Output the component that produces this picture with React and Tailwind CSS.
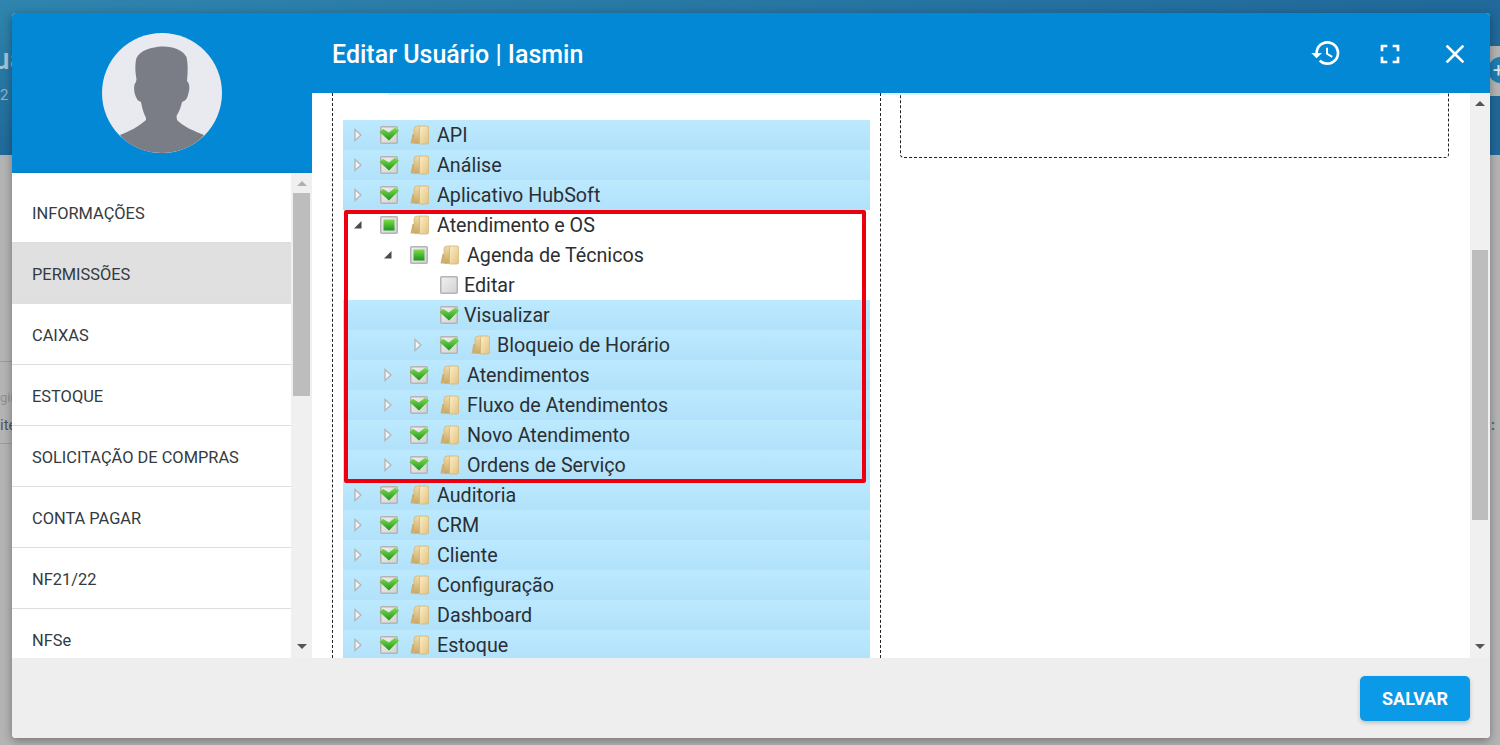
import React from "react";
import { MdHistory, MdFullscreen, MdClose } from "react-icons/md";

function Arrow({ open }) {
  if (open)
    return (
      <svg width="10" height="10" viewBox="0 0 10 10" className="block">
        <path d="M1 8.5 L8.5 8.5 L8.5 1 Z" fill="#4a4a4a" />
      </svg>
    );
  return (
    <svg width="8" height="14" viewBox="0 0 8 14" className="block">
      <path d="M1 1.5 L7 7 L1 12.5 Z" fill="#f2f6f8" stroke="#b4b8bb" strokeWidth="1.4" />
    </svg>
  );
}

function Check({ state, id }) {
  return (
    <svg width="18" height="18" viewBox="0 0 18 18" className="block shrink-0 overflow-visible">
      <defs>
        <linearGradient id={"g" + id} x1="0" y1="0" x2="0" y2="1">
          <stop offset="0" stopColor="#7fdc4a" />
          <stop offset="1" stopColor="#1c951f" />
        </linearGradient>
        <linearGradient id={"e" + id} x1="0" y1="0" x2="1" y2="1">
          <stop offset="0" stopColor="#f0f0f0" />
          <stop offset="1" stopColor="#d2d2d2" />
        </linearGradient>
      </defs>
      <rect x="0.75" y="0.75" width="16.5" height="16.5" rx="1" fill={`url(#e${id})`} stroke="#b4b4b4" strokeWidth="1.5" />
      {state === "on" && <path d="M-0.5 6 L3 2.8 L8.8 6.5 L15 1.8 L19 4.5 L9 14.5 Z" fill={`url(#g${id})`} />}
      {state === "part" && <rect x="3.5" y="3.5" width="11" height="11" fill={`url(#g${id})`} />}
    </svg>
  );
}

function Folder({ id }) {
  return (
    <svg width="19" height="20" viewBox="0 0 19 20" className="block shrink-0">
      <defs>
        <linearGradient id={"f" + id} x1="0" y1="0" x2="1" y2="1">
          <stop offset="0" stopColor="#fbeec6" />
          <stop offset="1" stopColor="#e2c27f" />
        </linearGradient>
        <linearGradient id={"l" + id} x1="0" y1="0" x2="0" y2="1">
          <stop offset="0" stopColor="#f0dca8" />
          <stop offset="1" stopColor="#c9a766" />
        </linearGradient>
      </defs>
      <path d="M0.5 18.5 L2.5 9 L7 9 L7 18.5 Z" fill="#cfae6e" />
      <path d="M4 4 Q4 1 7.5 1 L11 1 L11 18.5 L5.5 18.5 Q4 18.5 4 17 Z" fill={`url(#l${id})`} stroke="#d0b275" strokeWidth="0.7" />
      <path d="M9.5 2.5 Q9.5 1 12 1 L17 1 Q18.7 1 18.7 3 L18.7 17 Q18.7 19 16.7 19 L9.5 19 Z" fill={`url(#f${id})`} stroke="#d3b476" strokeWidth="0.8" />
    </svg>
  );
}

const rows = [
  { t: "API", l: 0, s: "on", blue: true },
  { t: "Análise", l: 0, s: "on", blue: true },
  { t: "Aplicativo HubSoft", l: 0, s: "on", blue: true },
  { t: "Atendimento e OS", l: 0, s: "part", open: true },
  { t: "Agenda de Técnicos", l: 1, s: "part", open: true },
  { t: "Editar", l: 2, s: "off", leaf: true },
  { t: "Visualizar", l: 2, s: "on", leaf: true, blue: true },
  { t: "Bloqueio de Horário", l: 2, s: "on", blue: true, wide: true },
  { t: "Atendimentos", l: 1, s: "on", blue: true },
  { t: "Fluxo de Atendimentos", l: 1, s: "on", blue: true },
  { t: "Novo Atendimento", l: 1, s: "on", blue: true },
  { t: "Ordens de Serviço", l: 1, s: "on", blue: true },
  { t: "Auditoria", l: 0, s: "on", blue: true },
  { t: "CRM", l: 0, s: "on", blue: true },
  { t: "Cliente", l: 0, s: "on", blue: true },
  { t: "Configuração", l: 0, s: "on", blue: true },
  { t: "Dashboard", l: 0, s: "on", blue: true },
  { t: "Estoque", l: 0, s: "on", blue: true },
];

const nav = ["INFORMAÇÕES", "PERMISSÕES", "CAIXAS", "ESTOQUE", "SOLICITAÇÃO DE COMPRAS", "CONTA PAGAR", "NF21/22", "NFSe"];

function Row({ r, i }) {
  const indent = r.l === 0 ? "pl-0" : r.l === 1 ? "pl-[30px]" : "pl-[60px]";
  return (
    <div
      className={`flex h-[30px] shrink-0 items-center ${indent} ${
        r.blue ? "bg-linear-to-b from-[#bce9fe] to-[#b1e2fb]" : "bg-white"
      }`}
    >
      <div className="flex w-[30px] shrink-0 items-center justify-center pr-[1px]">{!r.leaf && <Arrow open={r.open} />}</div>
      <div className="ml-[7px]">
        <Check state={r.s} id={i} />
      </div>
      {!r.leaf && (
        <div className={r.wide ? "ml-[13px]" : "ml-[12px]"}>
          <Folder id={i} />
        </div>
      )}
      <span className={`pt-[2px] text-[19.7px] leading-[30px] text-[#2b2f33] ${r.leaf ? "ml-[6px]" : r.wide ? "ml-[7px]" : "ml-[8px]"}`}>{r.t}</span>
    </div>
  );
}

function Scrollbar({ thumbTop, thumbH, className, upClass }) {
  return (
    <div className={`flex h-full shrink-0 flex-col items-center bg-[#f0f0f0] ${className}`}>
      <div className={`mt-[8px] h-0 w-0 border-x-[5px] border-b-[5px] border-x-transparent ${upClass}`} />
      <div className="w-full flex-1 px-[2px]" style={{ paddingTop: thumbTop }}>
        <div className="w-full bg-[#bdbdbd]" style={{ height: thumbH }} />
      </div>
      <div className="mb-[9px] h-0 w-0 border-x-[5px] border-t-[5px] border-x-transparent border-t-[#555]" />
    </div>
  );
}

export default function App() {
  return (
    <div className="relative h-[745px] w-[1500px] overflow-hidden bg-[#b4b4b4] font-['Roboto',sans-serif]">
      {/* Dimmed page behind the dialog */}
      <div className="h-[155px] bg-linear-to-br from-[#2f85ad] via-[#20699a] to-[#20689a]" />
      <div className="absolute left-[-7px] top-[36px] text-[30px] font-medium text-[#a5c4d6]">ua</div>
      <div className="absolute left-0 top-[84px] text-[15px] text-[#90b4c9]">2</div>
      <div className="absolute left-0 top-[361px] h-px w-[12px] bg-[#9c9c9c]" />
      <div className="absolute left-0 top-[390px] text-[13px] leading-[16px] text-[#8f8f8f]">gin</div>
      <div className="absolute left-0 top-[416px] text-[15px] leading-[18px] text-[#555]">ite</div>
      <div className="absolute left-0 top-[443px] h-px w-[12px] bg-[#9c9c9c]" />
      <div className="absolute left-[1490px] top-[46px] h-[50px] w-[10px] bg-[#b4b4b4]" />
      <div className="absolute left-[1488px] top-[57px] flex h-[26px] w-[26px] items-center justify-center rounded-full bg-[#1d7db3] pr-[5px] text-[20px] leading-none text-[#d8e6ee]">+</div>
      <div className="absolute left-[1491px] top-[418px] text-[14px] font-bold leading-[14px] text-[#4a6a80]">:</div>

      {/* Dialog */}
      <div className="absolute left-[12px] top-[13px] flex h-[725px] w-[1478px] flex-col overflow-hidden rounded-[4px] bg-white shadow-[0_3px_10px_rgba(0,0,0,0.35)]">
        <div className="flex min-h-0 flex-1 overflow-hidden">
          {/* Left column */}
          <div className="flex w-[300px] shrink-0 flex-col">
            <div className="flex h-[160px] shrink-0 items-center justify-center bg-[#0388d5]">
              <div className="h-[120px] w-[120px] overflow-hidden rounded-full bg-[#e9eaef]">
                <svg width="120" height="120" viewBox="0 0 120 120" className="block">
                  <path
                    d="M60 13.5 C50 14 38 17 34.5 25 C33 30 33 38 34.5 46 L34 49 C31 52 32 60 34 64 C35.5 68 38 68.5 39 69 C40 74 41 79 44 85 L44 87 C36 94 28 98 18 102 C26 114 42 120 60 120 C80 120 94 112 102 102 C92 98 82 94 75 87 L74.5 83 C77 79 79 74 80 69 C83 68 85 66 86 62 C88 56 88 51 85 48 C86 38 86 30 84.5 24 C81 17 70 13 60 13.5 Z"
                    fill="#7a7d85"
                  />
                </svg>
              </div>
            </div>
            <div className="relative flex min-h-0 flex-1 bg-white shadow-[1px_0_4px_rgba(0,0,0,0.12)]">
              <div className="min-w-0 flex-1 overflow-hidden pt-[9px]">
                {nav.map((n) => (
                  <div
                    key={n}
                    className={`flex h-[61px] items-center border-b border-[#dedede] pl-[20px] pt-[5px] text-[16.4px] text-[#333a40] ${
                      n === "PERMISSÕES" ? "bg-[#e0e0e0]" : ""
                    }`}
                  >
                    {n}
                  </div>
                ))}
              </div>
              <Scrollbar thumbTop={7} thumbH={203} className="w-[21px]" upClass="border-b-[#b0b0b0]" />
            </div>
          </div>

          {/* Right column */}
          <div className="flex min-w-0 flex-1 flex-col">
            <div className="flex h-[80px] shrink-0 items-center bg-[#0388d5] pl-[20px] text-white">
              <div className="pt-[3px] text-[25px] font-medium">Editar Usuário | Iasmin</div>
              <div className="ml-auto flex items-center pr-[19px]">
                <MdHistory size={32} />
                <MdFullscreen size={32} className="ml-[32px] mt-[2px]" />
                <MdClose size={32} className="ml-[33px] mt-[2px]" />
              </div>
            </div>
            <div className="relative flex min-h-0 flex-1 bg-white">
              <div className="absolute left-[76px] right-[50px] top-0 h-[2px] bg-[#dff3fc]" />
              <div className="flex min-w-0 flex-1 items-start overflow-hidden pl-[20px]">
                <div className="relative flex h-full w-[549px] shrink-0 flex-col overflow-hidden border-x border-dashed border-[#222] pl-[10px] pr-[10px] pt-[27px]">
                  {rows.map((r, i) => (
                    <Row key={r.t} r={r} i={i} />
                  ))}
                  <div className="absolute left-[11px] top-[117px] h-[273px] w-[522px] rounded-[2px] border-[4px] border-[#ec0010]" />
                </div>
                <div className="ml-[19px] h-[65px] w-[549px] shrink-0 rounded-b-[4px] border-x border-b border-dashed border-[#222]" />
              </div>
              <Scrollbar thumbTop={144} thumbH={270} className="w-[20px]" upClass="border-b-[#555]" />
            </div>
          </div>
        </div>

        {/* Footer */}
        <div className="flex h-[80px] shrink-0 items-start justify-end bg-[#eeeeee] pr-[20px] pt-[18px]">
          <button className="h-[45px] w-[110px] rounded-[5px] bg-[#0a9ae8] text-[18px] font-bold text-white shadow-[0_2px_4px_rgba(0,0,0,0.2)]">
            SALVAR
          </button>
        </div>
      </div>
    </div>
  );
}
